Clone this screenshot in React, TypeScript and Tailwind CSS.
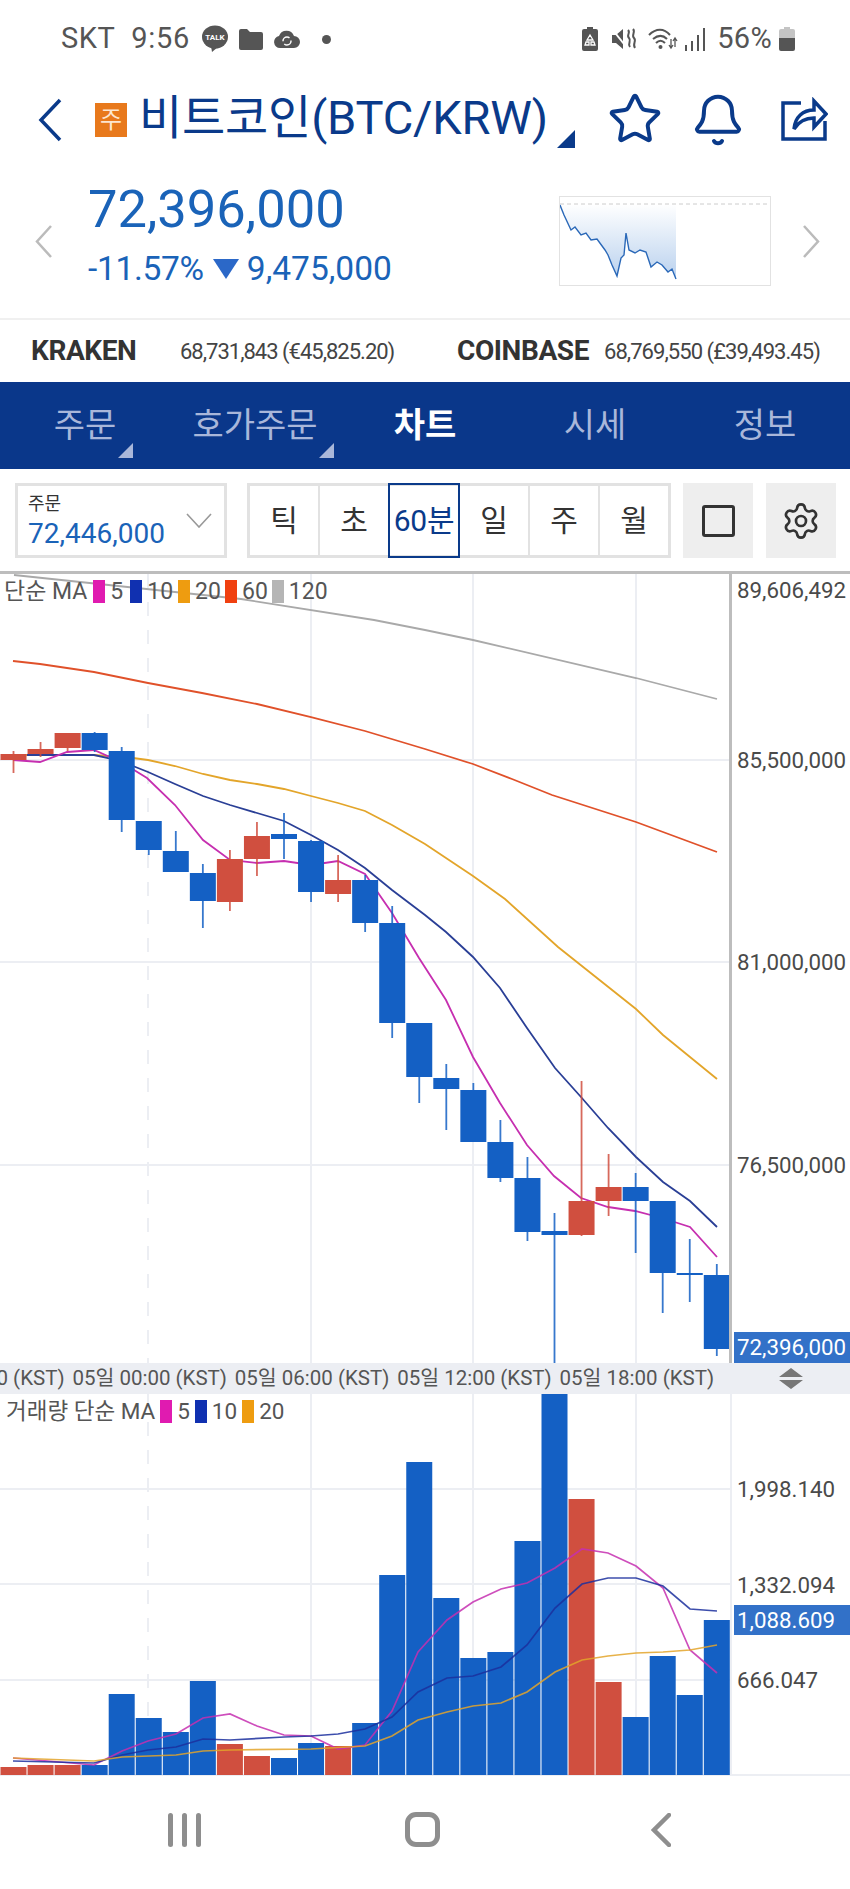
import React from "react";
import { Bell, Settings, Star } from "lucide-react";

type Candle = [number, number, number, number, "r" | "b"];

const BLUE = "#1460c4";
const RED = "#d04f3f";

// body top, body bottom, wick top, wick bottom
const candles: Candle[] = [
  [754, 760, 751, 773, "r"],
  [749, 754, 742, 757, "r"],
  [733, 748, 733, 751, "r"],
  [733, 750, 732, 752, "b"],
  [751, 820, 747, 832, "b"],
  [821, 850, 821, 855, "b"],
  [851, 872, 831, 872, "b"],
  [873, 901, 864, 928, "b"],
  [859, 902, 850, 911, "r"],
  [836, 859, 822, 876, "r"],
  [834, 839, 813, 859, "b"],
  [841, 892, 840, 902, "b"],
  [880, 894, 855, 902, "r"],
  [880, 923, 875, 932, "b"],
  [923, 1023, 906, 1038, "b"],
  [1023, 1077, 1023, 1103, "b"],
  [1078, 1089, 1064, 1130, "b"],
  [1090, 1142, 1083, 1142, "b"],
  [1142, 1178, 1120, 1182, "b"],
  [1178, 1232, 1157, 1241, "b"],
  [1231, 1235, 1213, 1363, "b"],
  [1201, 1235, 1081, 1236, "r"],
  [1187, 1201, 1154, 1216, "r"],
  [1187, 1201, 1173, 1253, "b"],
  [1201, 1273, 1201, 1313, "b"],
  [1273, 1275, 1239, 1302, "b"],
  [1275, 1349, 1264, 1356, "b"],
];

const volumes: [number, "r" | "b"][] = [
  [1767, "r"], [1765, "r"], [1765, "r"], [1765, "b"], [1694, "b"], [1718, "b"], [1732, "b"],
  [1681, "b"], [1744, "r"], [1756, "r"], [1758, "b"], [1743, "b"], [1746, "r"], [1723, "b"],
  [1575, "b"], [1462, "b"], [1598, "b"], [1658, "b"], [1652, "b"], [1541, "b"], [1394, "b"],
  [1499, "r"], [1682, "r"], [1717, "b"], [1656, "b"], [1695, "b"], [1620, "b"],
];

const priceMa = [
  { color: "#a9a9a9", pts: "14,575 241,599 374,620 425,630 473,640 636,678 717,699" },
  { color: "#e0512a", pts: "13,661 40,664 94,672 148,683 202,693 257,704 311,717 365,731 425,749 473,764 512,779 552,795 636,822 717,852" },
  { color: "#e3a52a", pts: "13,755 94,755 133,758 148,760 175,766 203,774 230,780 257,784 284,789 311,796 338,803 365,811 392,825 425,844 473,876 505,899 558,947 636,1009 663,1035 690,1057 717,1079" },
  { color: "#2a3f96", pts: "27,755 94,755 108,758 133,766 148,772 175,784 203,796 230,805 257,813 284,821 311,835 338,850 365,868 392,890 425,915 446,932 473,957 500,988 527,1028 555,1068 581,1097 608,1128 636,1157 663,1182 690,1201 717,1227" },
  { color: "#c62fb0", pts: "13,760 40,762 67,752 94,750 121,762 147,778 175,805 203,840 230,860 257,863 284,861 311,865 338,861 365,874 392,913 419,958 446,1000 473,1057 500,1103 527,1145 554,1176 581,1198 608,1207 635,1211 662,1218 690,1227 717,1257" },
];

const volumeMa = [
  { color: "#c62fb0", pts: "13,1758 94,1765 122,1751 148,1741 176,1734 203,1718 230,1714 257,1726 284,1735 311,1736 338,1749 365,1745 392,1711 418,1652 447,1620 473,1602 501,1589 527,1583 555,1568 582,1549 608,1553 636,1566 663,1588 690,1650 717,1673" },
  { color: "#1b2f9e", pts: "13,1761 94,1763 122,1755 148,1750 176,1747 203,1739 230,1740 284,1737 311,1736 338,1734 365,1729 392,1717 418,1692 447,1678 473,1676 501,1667 527,1645 555,1608 582,1584 608,1578 636,1578 663,1586 690,1609 717,1611" },
  { color: "#e3a52a", pts: "13,1758 94,1761 122,1757 176,1755 203,1751 230,1750 311,1749 365,1746 392,1736 418,1720 447,1712 473,1706 501,1703 527,1692 555,1672 582,1660 608,1656 636,1653 663,1652 690,1650 717,1645" },
];

const spark = "0,8 4,18 11,33 15,30 21,38 26,36 31,43 37,42 45,53 48,58 52,68 57,79 61,61 64,58 66,36 69,53 75,56 80,53 86,55 91,70 97,65 102,68 108,75 112,72 116,82";

const cx = (i: number) => 13.5 + 27.05 * i;

const StatusBar = () => (
  <div className="flex items-center justify-between h-[76px] pt-[2px] pl-[61px] pr-[55px] text-[#555] text-[29px]">
    <div className="flex items-center">
      <span className="tracking-[0.5px]">SKT</span>
      <span className="ml-[16px] tracking-[0.7px]">9:56</span>
      <svg className="ml-[12px]" width="26" height="28" viewBox="0 0 26 28">
        <ellipse cx="13" cy="12" rx="13" ry="11.5" fill="#555" />
        <path d="M9 21l1 6 6-5z" fill="#555" />
        <text x="13" y="15" textAnchor="middle" fontSize="8" fontWeight="700" fill="#fff">TALK</text>
      </svg>
      <svg className="ml-[11px]" width="24" height="21" viewBox="0 0 24 21">
        <path d="M0 2a2 2 0 0 1 2-2h6l3 3h11a2 2 0 0 1 2 2v14a2 2 0 0 1-2 2H2a2 2 0 0 1-2-2z" fill="#555" />
      </svg>
      <svg className="ml-[11px]" width="26" height="18" viewBox="0 0 26 18">
        <path d="M6 18a6 6 0 0 1-1-11.9A8 8 0 0 1 20 6a6 6 0 0 1 0 12z" fill="#555" />
        <circle cx="13" cy="11" r="4" fill="none" stroke="#fff" strokeWidth="1.5" strokeDasharray="9 3" />
      </svg>
      <span className="ml-[22px] w-[9px] h-[9px] rounded-full bg-[#555]" />
    </div>
    <div className="flex items-center">
      <svg width="16" height="24" viewBox="0 0 16 24">
        <path d="M5 0h6v2h3a2 2 0 0 1 2 2v18a2 2 0 0 1-2 2H2a2 2 0 0 1-2-2V4a2 2 0 0 1 2-2h3z" fill="#555" />
        <path d="M8 8l3 5H5zM4 15h3v3H3zM9 15h3l1 3H9z" fill="none" stroke="#fff" strokeWidth="1.3" />
      </svg>
      <svg className="ml-[13px]" width="26" height="24" viewBox="0 0 26 24">
        <path d="M1 8h4l7-6v20l-7-6H1z" fill="#555" />
        <path d="M1 2l16 20" stroke="#fff" strokeWidth="2" />
        <path d="M17 3c3 3-2 5 1 8s-2 5 1 9M22 2c3 3-2 6 1 9s-2 6 1 10" fill="none" stroke="#555" strokeWidth="2" />
      </svg>
      <svg className="ml-[11px]" width="30" height="24" viewBox="0 0 30 24">
        <path d="M1 8c7-7 15-7 21 0M5 12c5-4 10-4 14 0M8 16c3-3 6-3 9 0" fill="none" stroke="#555" strokeWidth="2" />
        <circle cx="12.5" cy="20" r="2" fill="#555" />
        <path d="M23 12v9M21 18l2 3 2-3M27 20v-9M25 14l2-3 2 3" fill="none" stroke="#555" strokeWidth="1.3" />
      </svg>
      <svg className="ml-[6px]" width="22" height="24" viewBox="0 0 22 24">
        <path d="M1 18h2v6H1zM7 14h2v10H7zM13 8h2v16h-2zM19 1h2v23h-2z" fill="#555" />
      </svg>
      <span className="ml-[11px] tracking-[0.3px]">56%</span>
      <svg className="ml-[7px]" width="16" height="24" viewBox="0 0 16 24">
        <path d="M5 0h6v2h3a2 2 0 0 1 2 2v7H0V4a2 2 0 0 1 2-2h3z" fill="#c4c4c4" />
        <path d="M0 11h16v11a2 2 0 0 1-2 2H2a2 2 0 0 1-2-2z" fill="#555" />
      </svg>
    </div>
  </div>
);

const Header = () => (
  <div className="flex items-center h-[88px] pl-[38px] text-[#0a3a8a]">
    <svg width="24" height="44" viewBox="0 0 24 44" fill="none" stroke="currentColor" strokeWidth="3.5">
      <path d="M22 2L3 22l19 20" />
    </svg>
    <span className="ml-[33px] w-[32px] h-[34px] flex items-center justify-center bg-[#e8791c] text-[#fde6cf] text-[24px]">주</span>
    <span className="ml-[12px] -mt-[3px] w-[404px] text-[47px] tracking-[-0.2px] whitespace-nowrap">비트코인(BTC/KRW)</span>
    <span className="ml-[14px] mt-[38px] w-0 h-0 border-l-[18px] border-l-transparent border-b-[18px] border-b-[#0a3a8a]" />
    <Star className="ml-[32px] -mt-[3px]" size={56} strokeWidth={1.7} />
    <Bell className="ml-[27px] -mt-[1px]" size={56} strokeWidth={1.7} />
    <svg className="ml-[34px] -mt-[3px]" width="48" height="44" viewBox="0 0 48 44" fill="none" stroke="currentColor" strokeWidth="3.5">
      <path d="M21 6H3v36h42V24" />
      <path d="M14 32c1-12 9-19 20-19V4l12 13-12 13v-9c-9 0-15 3-20 11z" />
    </svg>
  </div>
);

const PriceRow = () => (
  <div className="flex items-center h-[154px] pl-[35px]">
    <svg width="17" height="33" viewBox="0 0 17 33" fill="none" stroke="#bbb" strokeWidth="2.5">
      <path d="M16 1L2 16.5 16 32" />
    </svg>
    <div className="ml-[36px] -mt-[4px] w-[471px] text-[#1a63b8]">
      <div className="text-[52.5px] leading-[60px]">72,396,000</div>
      <div className="flex items-center text-[33.5px] leading-[60px]">
        <span className="tracking-[-0.3px]">-11.57%</span>
        <span className="ml-[9px] w-0 h-0 border-x-[13px] border-x-transparent border-t-[20px] border-t-[#2b68c8]" />
        <span className="ml-[8px]">9,475,000</span>
      </div>
    </div>
    <div className="w-[212px] h-[90px] border border-[#e2e2e2]">
      <svg width="210" height="88" viewBox="0 0 210 88">
        <defs>
          <linearGradient id="spark-fill" x1="0" y1="0" x2="0" y2="1">
            <stop offset="0" stopColor="#ffffff" />
            <stop offset="1" stopColor="#b9d1ee" />
          </linearGradient>
        </defs>
        <polygon points={`116,7 0,7 ${spark}`} fill="url(#spark-fill)" />
        <line x1="0" y1="7" x2="210" y2="7" stroke="#ccc" strokeDasharray="4 3" />
        <polyline points={spark} fill="none" stroke="#2a68b8" strokeWidth="1.4" />
      </svg>
    </div>
    <svg className="ml-[32px]" width="17" height="33" viewBox="0 0 17 33" fill="none" stroke="#bbb" strokeWidth="2.5">
      <path d="M1 1l14 15.5L1 32" />
    </svg>
  </div>
);

const ExchangeRow = () => (
  <div className="flex items-center h-[64px] pl-[31px] border-t-2 border-[#f0f0f0] whitespace-nowrap text-[#444]">
    <span className="w-[149px] text-[28px] font-bold tracking-[-0.4px] text-[#333]">KRAKEN</span>
    <span className="w-[277px] text-[22px] tracking-[-1px]">68,731,843 (€45,825.20)</span>
    <span className="w-[147px] text-[28px] font-bold tracking-[-0.4px] text-[#333]">COINBASE</span>
    <span className="text-[22px] tracking-[-0.95px]">68,769,550 (£39,493.45)</span>
  </div>
);

const NavTabs = () => (
  <div className="grid grid-cols-5 h-[87px] bg-[#0a378a] text-[34px] text-[#a9b7da]">
    <div className="relative flex items-center justify-center pb-[1px]">
      주문
      <span className="absolute right-[37px] bottom-[11px] w-0 h-0 border-l-[15px] border-l-transparent border-b-[15px] border-b-[#a9b7da]" />
    </div>
    <div className="relative flex items-center justify-center pb-[1px]">
      호가주문
      <span className="absolute right-[6px] bottom-[11px] w-0 h-0 border-l-[15px] border-l-transparent border-b-[15px] border-b-[#a9b7da]" />
    </div>
    <div className="flex items-center justify-center pb-[1px] font-bold text-white">차트</div>
    <div className="flex items-center justify-center pb-[1px]">시세</div>
    <div className="flex items-center justify-center pb-[1px]">정보</div>
  </div>
);

const Controls = () => (
  <div className="flex items-start h-[102px] pt-[14px] pl-[15px] text-[#333]">
    <div className="relative w-[212px] h-[75px] border-[3px] border-[#e2e2e2] pl-[10px] pt-[8px]">
      <div className="text-[18px] leading-[20px]">주문</div>
      <div className="text-[28px] leading-[34px] mt-[3px] text-[#1a63b8]">72,446,000</div>
      <svg className="absolute right-[12px] top-[27px]" width="26" height="15" viewBox="0 0 26 15" fill="none" stroke="#999" strokeWidth="1.6">
        <path d="M1 1l12 13L25 1" />
      </svg>
    </div>
    <div className="flex ml-[20px] w-[424px] h-[75px] border-[3px] border-[#e2e2e2] text-[30px]">
      <div className="flex-1 flex items-center justify-center border-r-2 border-[#e2e2e2]">틱</div>
      <div className="flex-1 flex items-center justify-center">초</div>
      <div className="flex-1 flex items-center justify-center -my-[3px] border-2 border-[#0a3a8a] text-[#0a3a8a] whitespace-nowrap tracking-[-0.3px]">60분</div>
      <div className="flex-1 flex items-center justify-center border-r-2 border-[#e2e2e2]">일</div>
      <div className="flex-1 flex items-center justify-center border-r-2 border-[#e2e2e2]">주</div>
      <div className="flex-1 flex items-center justify-center">월</div>
    </div>
    <div className="flex items-center justify-center ml-[12px] w-[70px] h-[75px] bg-[#eeeeee]">
      <div className="w-[33px] h-[32px] rounded-[3px] border-[3px] border-[#333]" />
    </div>
    <div className="flex items-center justify-center ml-[13px] w-[70px] h-[75px] bg-[#eeeeee]">
      <Settings size={40} strokeWidth={1.6} />
    </div>
  </div>
);

const Swatch = ({ color, label, gap }: { color: string; label: string; gap: string }) => (
  <>
    <span className={`h-[23px] w-[12px] ${gap}`} style={{ background: color }} />
    <span className="ml-[5px]">{label}</span>
  </>
);

const GridLines = ({ rows, top, bottom }: { rows: number[]; top: number; bottom: number }) => (
  <g stroke="#eceef3" strokeWidth="2">
    {rows.map((y) => (
      <line key={y} x1="0" y1={y} x2="730" y2={y} />
    ))}
    <line x1="148" y1={top} x2="148" y2={bottom} strokeDasharray="14 14" />
    <line x1="311" y1={top} x2="311" y2={bottom} />
    <line x1="473" y1={top} x2="473" y2={bottom} />
    <line x1="636" y1={top} x2="636" y2={bottom} />
  </g>
);

const AxisLabel = ({ top, children }: { top: string; children: React.ReactNode }) => (
  <span className={`absolute left-[737px] text-[22.3px] leading-[30px] text-[#4a4a4a] ${top}`}>{children}</span>
);

const PriceChart = () => (
  <div className="relative h-[792px] border-t-[3px] border-[#bdbdbd]">
    <div className="w-[732px] h-[789px] border-r-[3px] border-[#bdbdbd]">
      <svg width="729" height="789" viewBox="0 574 729 789">
        <GridLines rows={[760, 962, 1165]} top={574} bottom={1363} />
        {/* averages run behind the candle bodies */}
        {priceMa.map((m) => (
          <polyline key={m.color} points={m.pts} fill="none" stroke={m.color} strokeWidth="1.8" />
        ))}
        {candles.map(([top, bottom, wt, wb, c], i) => (
          <g key={i} fill={c === "r" ? RED : BLUE}>
            <rect x={cx(i) - 0.9} y={wt} width="1.8" height={wb - wt} opacity="0.85" />
            <rect x={cx(i) - 13} y={top} width="26" height={bottom - top} />
          </g>
        ))}
      </svg>
    </div>
    <div className="absolute left-[4px] top-[6px] flex items-center h-[23px] text-[23px] leading-[23px] text-[#555] whitespace-nowrap">
      <span>단순 MA</span>
      <Swatch color="#e01bb0" label="5" gap="ml-[6px]" />
      <Swatch color="#1030b0" label="10" gap="ml-[7px]" />
      <Swatch color="#ee9c10" label="20" gap="ml-[5px]" />
      <Swatch color="#f04010" label="60" gap="ml-[4px]" />
      <Swatch color="#b5b5b5" label="120" gap="ml-[4px]" />
    </div>
    <AxisLabel top="top-[1px]">89,606,492</AxisLabel>
    <AxisLabel top="top-[171px]">85,500,000</AxisLabel>
    <AxisLabel top="top-[373px]">81,000,000</AxisLabel>
    <AxisLabel top="top-[576px]">76,500,000</AxisLabel>
    <span className="absolute left-[734px] right-0 bottom-0 h-[31px] pl-[3px] bg-[#3271c8] text-white text-[22.3px] leading-[31px]">72,396,000</span>
  </div>
);

const TimeBar = () => (
  <div className="relative flex h-[31px] overflow-hidden bg-[#eceef3] text-[20.5px] leading-[31px] text-[#555] whitespace-nowrap">
    <div className="flex -ml-[90px]">
      {["04일 18:00 (KST)", "05일 00:00 (KST)", "05일 06:00 (KST)", "05일 12:00 (KST)", "05일 18:00 (KST)"].map((t) => (
        <span key={t} className="w-[162.4px] shrink-0">{t}</span>
      ))}
    </div>
    <svg className="absolute left-[778px] top-[5px]" width="26" height="21" viewBox="0 0 26 21" fill="#777">
      <path d="M13 0l12 9H1zM1 12h24L13 21z" />
    </svg>
  </div>
);

const VolumeChart = () => (
  <div className="relative h-[382px] border-b-2 border-[#eceef3]">
    <div className="w-[732px] h-[381px] border-r-2 border-[#eceef3]">
      <svg width="730" height="381" viewBox="0 1394 730 381">
        <GridLines rows={[1489, 1584, 1680]} top={1394} bottom={1775} />
        {volumes.map(([top, c], i) => (
          <rect key={i} x={cx(i) - 13} y={top} width="26" height={1775 - top} fill={c === "r" ? RED : BLUE} />
        ))}
        {volumeMa.map((m) => (
          <polyline key={m.color} points={m.pts} fill="none" stroke={m.color} strokeWidth="1.7" strokeOpacity="0.85" />
        ))}
      </svg>
    </div>
    <div className="absolute left-[6px] top-[6px] flex items-center h-[23px] text-[22.5px] leading-[23px] text-[#555] whitespace-nowrap">
      <span>거래량 단순 MA</span>
      <Swatch color="#e01bb0" label="5" gap="ml-[5px]" />
      <Swatch color="#1030b0" label="10" gap="ml-[5px]" />
      <Swatch color="#ee9c10" label="20" gap="ml-[5px]" />
    </div>
    <AxisLabel top="top-[80px]">1,998.140</AxisLabel>
    <AxisLabel top="top-[176px]">1,332.094</AxisLabel>
    <AxisLabel top="top-[271px]">666.047</AxisLabel>
    <span className="absolute left-[734px] right-0 top-[211px] h-[30px] pl-[3px] bg-[#3271c8] text-white text-[22.3px] leading-[30px]">1,088.609</span>
  </div>
);

const BottomNav = () => (
  <div className="flex items-center h-[113px] pb-[6px]">
    <div className="flex gap-[9px] ml-[168px] w-[237px]">
      <span className="w-[5px] h-[34px] rounded-full bg-[#8e8e8e]" />
      <span className="w-[5px] h-[34px] rounded-full bg-[#8e8e8e]" />
      <span className="w-[5px] h-[34px] rounded-full bg-[#8e8e8e]" />
    </div>
    <span className="w-[35px] h-[35px] rounded-[11px] border-[5px] border-[#8e8e8e]" />
    <svg className="ml-[211px]" width="20" height="34" viewBox="0 0 20 34" fill="none" stroke="#8e8e8e" strokeWidth="4.5" strokeLinecap="round">
      <path d="M18 2L3 17l15 15" />
    </svg>
  </div>
);

export default function App() {
  return (
    <div className="w-[850px] h-[1889px] overflow-hidden bg-white [font-family:Roboto,'Noto_Sans_CJK_KR',sans-serif]">
      <StatusBar />
      <Header />
      <PriceRow />
      <ExchangeRow />
      <NavTabs />
      <Controls />
      <PriceChart />
      <TimeBar />
      <VolumeChart />
      <BottomNav />
    </div>
  );
}
